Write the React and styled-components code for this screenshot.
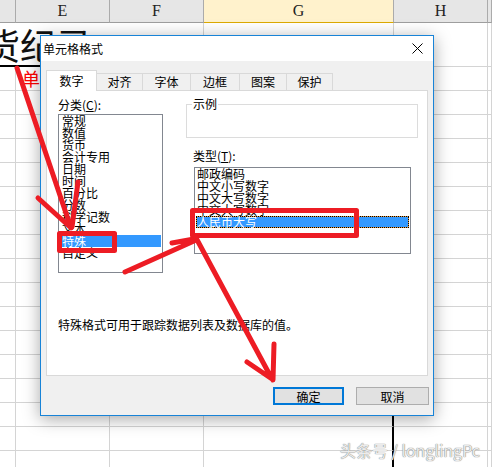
import React from 'react';
import styled, { createGlobalStyle } from 'styled-components';

const GlobalStyle = createGlobalStyle`
  html, body {
    margin: 0;
    padding: 0;
    background: #fff;
  }
  body {
    font-family: "Noto Sans CJK SC", "Liberation Sans", sans-serif;
  }
`;

const Page = styled.div`
  position: relative;
  width: 492px;
  height: 467px;
  overflow: hidden;
  background: #fff;
`;

/* ---------- spreadsheet behind the dialog ---------- */

const Sheet = styled.div`
  display: grid;
  grid-template-columns: 16px 94px 94px 190px 94px 1fr;
  grid-template-rows: 23px 44px;
  grid-auto-rows: 24px;
`;

const HeaderCell = styled.div`
  box-sizing: border-box;
  display: flex;
  align-items: center;
  justify-content: center;
  background: ${p => (p.$active ? '#fff2cc' : '#e6e6e6')};
  border-right: 1px solid #ababab;
  border-bottom: 1px solid ${p => (p.$active ? '#dcaa00' : '#9e9e9e')};
  font-family: "Liberation Serif", serif;
  font-size: 16px;
  color: #222;
`;

const Cell = styled.div`
  box-sizing: border-box;
  border-right: ${p => (p.$thickRight ? '2px solid #000' : '1px solid #d4d4d4')};
  border-bottom: 1px solid #d4d4d4;
`;

const TitleCell = styled.div`
  grid-column: span 2;
  box-sizing: border-box;
  border-bottom: 2px solid #000;
  font-size: 36px;
  line-height: 42px;
  text-indent: -16px;
  white-space: nowrap;
  color: #111;
`;

const RedCell = styled(Cell)`
  padding-left: 6px;
  font-size: 18px;
  line-height: 23px;
  color: #ff0000;
  white-space: nowrap;
`;

/* ---------- dialog ---------- */

const Dialog = styled.div`
  position: absolute;
  left: 40px;
  top: 35px;
  width: 394px;
  height: 381px;
  box-sizing: border-box;
  border: 1px solid #1883d7;
  background: #f0f0f0;
  box-shadow: 0 3px 16px rgba(0, 0, 0, 0.35);
  display: flex;
  flex-direction: column;
  font-size: 12px;
  color: #000;
`;

const TitleBar = styled.div`
  height: 25px;
  background: #fff;
  display: flex;
  align-items: center;
  justify-content: space-between;
  padding: 0 10px 0 2px;
`;

const Body = styled.div`
  padding: 9px 5px 0 5px;
  display: flex;
  flex-direction: column;
`;

const TabStrip = styled.div`
  display: flex;
  align-items: flex-end;
  height: 21px;
`;

const Tab = styled.div`
  position: relative;
  z-index: ${p => (p.$selected ? 2 : 0)};
  box-sizing: border-box;
  width: ${p => p.$w}px;
  height: ${p => (p.$selected ? 21 : 18)}px;
  display: flex;
  align-items: ${p => (p.$selected ? 'center' : 'flex-start')};
  justify-content: center;
  line-height: 16px;
  background: ${p => (p.$selected ? '#fff' : '#f0f0f0')};
  border-top: 1px solid #d9d9d9;
  border-right: 1px solid #d9d9d9;
  border-left: ${p => (p.$selected ? '1px solid #d9d9d9' : 'none')};
`;

const Panel = styled.div`
  position: relative;
  z-index: 1;
  margin-top: -1px;
  height: 286px;
  box-sizing: border-box;
  background: #fff;
  border: 1px solid #d9d9d9;
  padding: 6px 0 0 11px;
  display: flex;
  flex-direction: column;
`;

const Columns = styled.div`
  display: flex;
  gap: 23px;
`;

const Column = styled.div`
  width: ${p => p.$w}px;
  display: flex;
  flex-direction: column;
`;

const Label = styled.div`
  line-height: 16px;
  margin: ${p => p.$margin || '0'};
`;

const ListBox = styled.div`
  box-sizing: border-box;
  width: ${p => p.$w}px;
  height: ${p => p.$h}px;
  margin-left: ${p => p.$indent || 0}px;
  border: 1px solid #828790;
  background: #fff;
  padding: ${p => p.$pad};
  overflow: hidden;
`;

const ListItem = styled.div`
  box-sizing: border-box;
  height: 12px;
  line-height: 12px;
  padding-left: 1px;
  white-space: nowrap;
  color: ${p => (p.$selected ? '#fff' : '#000')};
  background: ${p => (p.$selected ? '#3399ff' : 'transparent')};
`;

const FocusItem = styled(ListItem)`
  border: 1px dotted #000;
  padding-left: 0;
  line-height: 10px;
  background: linear-gradient(#3399ff, #3399ff) padding-box, #e89a3c border-box;
`;

const GroupBox = styled.fieldset`
  margin: 0;
  padding: 0 0 0 5px;
  height: 41px;
  box-sizing: border-box;
  border: 1px solid #dcdcdc;
  min-inline-size: 0;
`;

const Legend = styled.legend`
  padding: 0 1px;
  font-size: 12px;
  line-height: 14px;
`;

const Description = styled.div`
  margin-top: 45px;
  line-height: 14px;
`;

const Footer = styled.div`
  display: flex;
  justify-content: flex-end;
  gap: 12px;
  margin: 11px -1px 0 0;
`;

const Button = styled.div`
  box-sizing: border-box;
  width: ${p => p.$w}px;
  height: 18px;
  display: flex;
  align-items: center;
  justify-content: center;
  background: #e1e1e1;
  border: ${p => (p.$primary ? '2px solid #0078d7' : '1px solid #adadad')};
`;

/* ---------- annotations over everything ---------- */

const Overlay = styled.svg`
  position: absolute;
  left: 0;
  top: 0;
  z-index: 5;
  pointer-events: none;
`;

const Watermark = styled.div`
  position: absolute;
  right: 12px;
  top: 440px;
  z-index: 6;
  font-size: 16px;
  line-height: 20px;
  color: #ececec;
  text-shadow: 0 0 1px #777, 0 0 1px #999;
  white-space: nowrap;
`;

const columns = ['', 'E', 'F', 'G', 'H', ''];
const tabs = [
  { label: '数字', w: 51 },
  { label: '对齐', w: 46 },
  { label: '字体', w: 48 },
  { label: '边框', w: 49 },
  { label: '图案', w: 47 },
  { label: '保护', w: 46 },
];
const categories = ['常规', '数值', '货币', '会计专用', '日期', '时间', '百分比', '分数', '科学记数', '文本', '特殊', '自定义'];
const types = ['邮政编码', '中文小写数字', '中文大写数字', '中文大写数字'];

const CloseIcon = () => (
  <svg width="11" height="11" viewBox="0 0 11 11">
    <path d="M0.5 0.5 L10.5 10.5 M10.5 0.5 L0.5 10.5" stroke="#000" strokeWidth="1" />
  </svg>
);

const SheetGrid = () => {
  const rows = [];
  for (let i = 0; i < 17; i++) {
    columns.forEach((c, j) => {
      if (i === 0 && j === 1) {
        rows.push(<RedCell key={`r${i}c${j}`}>单</RedCell>);
      } else {
        rows.push(<Cell key={`r${i}c${j}`} $thickRight={j === 3 && i >= 14} />);
      }
    });
  }
  return (
    <Sheet>
      {columns.map((c, i) => (
        <HeaderCell key={`h${i}`} $active={c === 'G'}>{c}</HeaderCell>
      ))}
      <TitleCell>货纪录</TitleCell>
      <Cell />
      <Cell />
      <Cell />
      <Cell />
      {rows}
    </Sheet>
  );
};

const Annotations = () => (
  <Overlay width="492" height="467" viewBox="0 0 492 467">
    <g fill="none" stroke="#ed1c24" strokeWidth="5" strokeLinecap="round" strokeLinejoin="round">
      <path d="M17 68 L71 228 M78 182 L72 227 M38 198 L70 227" />
      <rect x="59.5" y="233.5" width="55" height="17" />
      <path d="M125 272 L194 241 M172 243 L194 239" />
      <rect x="192.5" y="210.5" width="164" height="25" />
      <path d="M195 236 L272 379 M274 344 L273 380 M247 362 L272 379" />
    </g>
  </Overlay>
);

const App = () => (
  <Page>
    <GlobalStyle />
    <SheetGrid />
    <Dialog>
      <TitleBar>
        <span>单元格格式</span>
        <CloseIcon />
      </TitleBar>
      <Body>
        <TabStrip>
          {tabs.map((t, i) => (
            <Tab key={t.label} $w={t.w} $selected={i === 0}>{t.label}</Tab>
          ))}
        </TabStrip>
        <Panel>
          <Columns>
            <Column $w={105}>
              <Label $margin="0 0 1px 0">分类(<u>C</u>):</Label>
              <ListBox $w={105} $h={159} $pad="0 1px 0 2px">
                {categories.map(c => (
                  <ListItem key={c} $selected={c === '特殊'}>{c}</ListItem>
                ))}
              </ListBox>
            </Column>
            <Column $w={232}>
              <GroupBox>
                <Legend>示例</Legend>
              </GroupBox>
              <Label $margin="10px 0 3px 7px">类型(<u>T</u>):</Label>
              <ListBox $w={217} $h={87} $indent={8} $pad="0 1px">
                {types.map((t, i) => (
                  <ListItem key={i}>{t}</ListItem>
                ))}
                <FocusItem $selected>人民币大写</FocusItem>
              </ListBox>
            </Column>
          </Columns>
          <Description>特殊格式可用于跟踪数据列表及数据库的值。</Description>
        </Panel>
        <Footer>
          <Button $w={71} $primary>确定</Button>
          <Button $w={73}>取消</Button>
        </Footer>
      </Body>
    </Dialog>
    <Annotations />
    <Watermark>头条号 / longlingPc</Watermark>
  </Page>
);

export default App;
